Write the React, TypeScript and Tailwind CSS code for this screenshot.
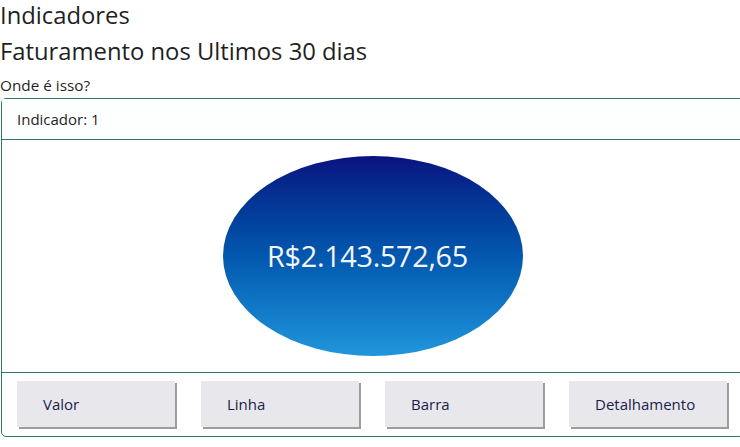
import React from "react";

const buttons = ["Valor", "Linha", "Barra", "Detalhamento"];

export default function App() {
  return (
    <div
      className="w-[740px] h-[447px] overflow-hidden bg-white text-[#1f1f1f]"
      style={{ fontFamily: '"Open Sans", "Noto Sans", sans-serif' }}
    >
      <div className="h-[30px] text-[23.8px] leading-[30px]">Indicadores</div>
      <div className="h-[43px] text-[23.8px] leading-[43px]">Faturamento nos Ultimos 30 dias</div>
      <div className="h-[25px] text-[15.3px] leading-[25px]">Onde é isso?</div>
      <div className="ml-px w-[743px] h-[339px] border border-[#2b7a5c] rounded-[5px] flex flex-col">
        <div className="h-[41px] border-b border-[#2b7a5c] bg-[#fdffff] flex items-center pl-[15px] text-[15px] text-[#1f1f1f]">
          Indicador: 1
        </div>
        <div className="h-[232px] bg-white flex items-center justify-center">
          <div className="w-[300px] h-[200px] rounded-[50%] bg-gradient-to-b from-[#0a1180] to-[#2196dc] flex items-center justify-center text-[#f4f6ff] text-[28.8px] tracking-[-0.3px] pr-[10px]">
            R$2.143.572,65
          </div>
        </div>
        <div className="flex-1 border-t border-[#2b7a5c] flex items-start pt-[8px] pl-[15px] gap-[26px]">
          {buttons.map((b) => (
            <div
              key={b}
              className="w-[158px] h-[46px] bg-[#e8e8ec] shadow-[2px_2px_0_#9d9d9d] flex items-center pl-[26px] text-[15px] text-[#1c1c4a]"
            >
              {b}
            </div>
          ))}
        </div>
      </div>
    </div>
  );
}
